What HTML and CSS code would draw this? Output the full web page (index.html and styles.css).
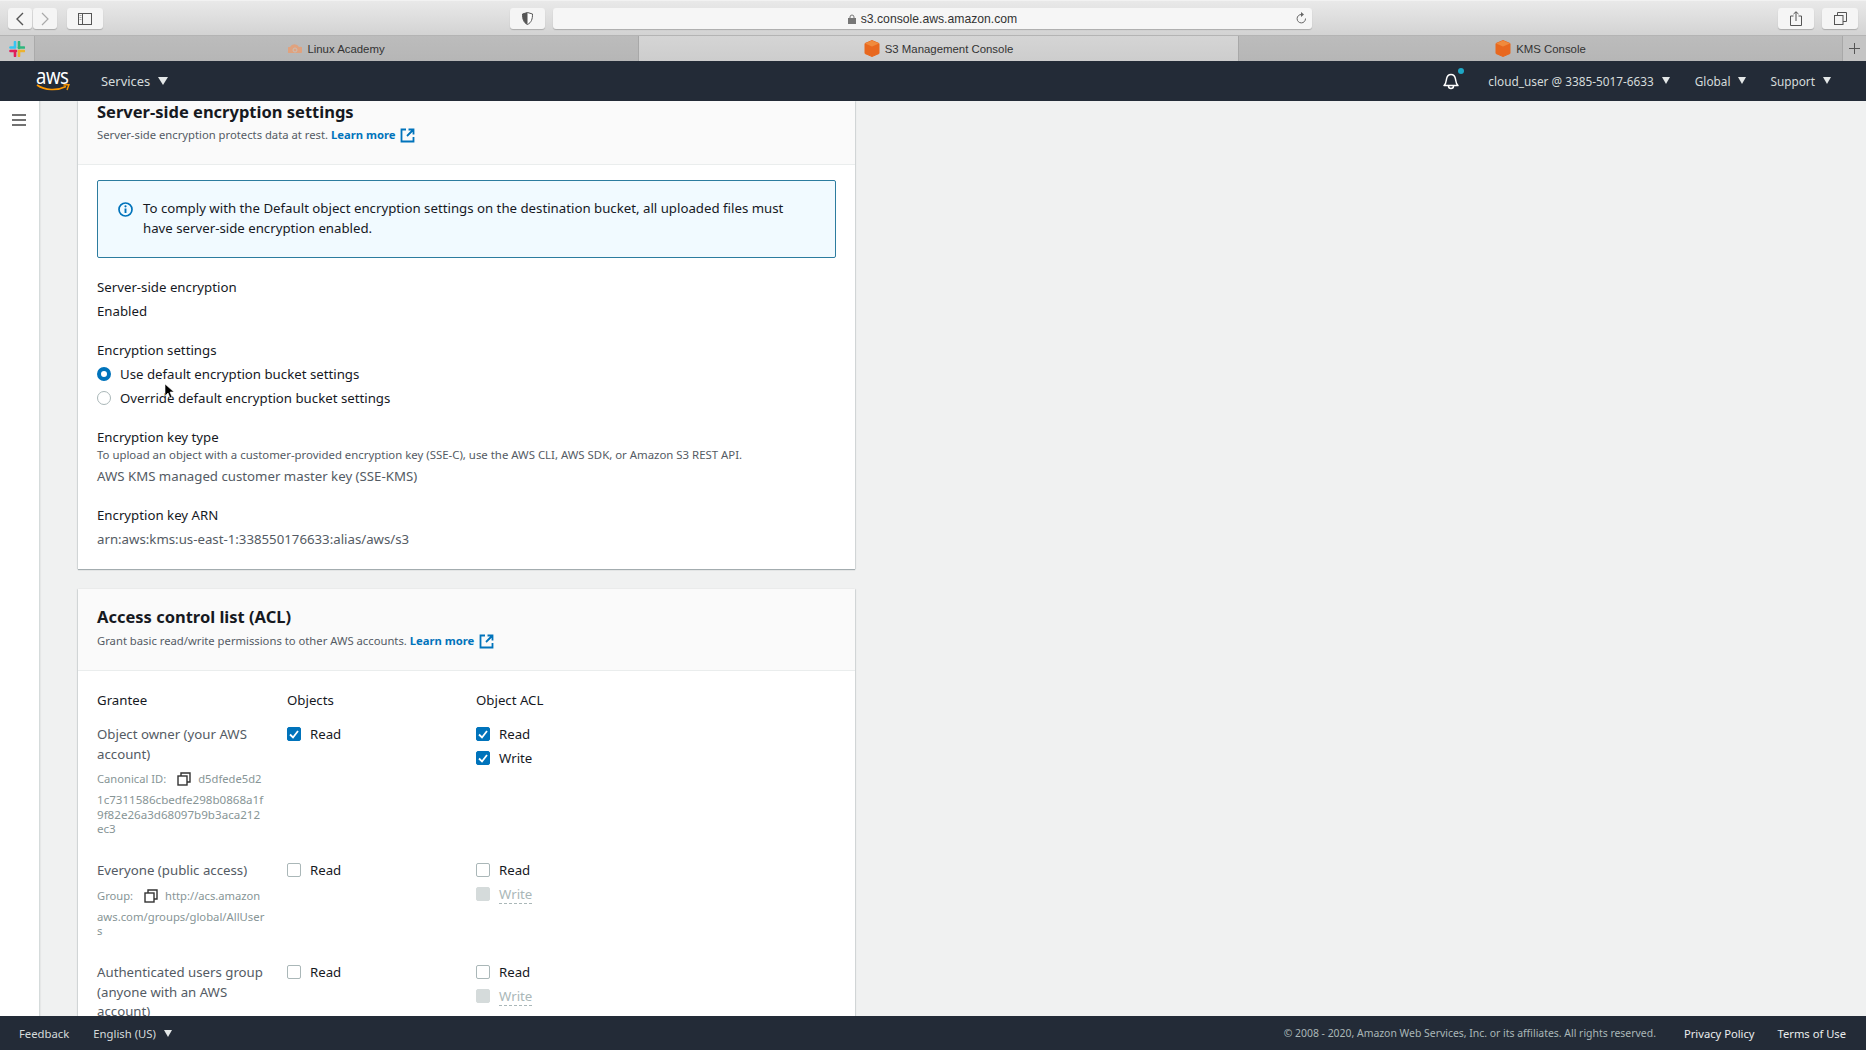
FILE: index.html
```html
<!DOCTYPE html>
<html lang="en">
<head>
<meta charset="utf-8">
<title>S3 Management Console</title>
<link rel="stylesheet" href="styles.css">
</head>
<body>
<div class="app">
  <header class="toolbar">
    <div class="tb-group">
      <div class="btn-pair">
        <button class="tb-btn nav-btn"><svg width="10" height="14" viewBox="0 0 10 14"><path d="M8 1 2 7l6 6" fill="none" stroke="#555" stroke-width="1.4"/></svg></button>
        <button class="tb-btn nav-btn"><svg width="10" height="14" viewBox="0 0 10 14"><path d="m2 1 6 6-6 6" fill="none" stroke="#aaa" stroke-width="1.2"/></svg></button>
      </div>
      <button class="tb-btn side-btn"><svg width="14" height="12" viewBox="0 0 14 12"><rect x=".5" y=".5" width="13" height="11" fill="none" stroke="#555"/><path d="M4.5 1v10" stroke="#555"/><path d="M1.5 2.500h2M1.500 4.500h2M1.500 6.500h2" stroke="#aaa"/></svg></button>
    </div>
    <div class="tb-center">
      <button class="tb-btn shield-btn"><svg width="11" height="13" viewBox="0 0 11 13"><path d="M5.500.5 10.500 2c0 5-1 8.500-5 10.500C1.500 10.500.5 7 .5 2z" fill="#fff" stroke="#555"/><path d="M5.500.5.500 2c0 5 1 8.500 5 10.500z" fill="#555"/></svg></button>
      <div class="address">
        <span class="url"><svg class="lock" width="8" height="10" viewBox="0 0 8 10"><rect y="4" width="8" height="6" fill="#777"/><path d="M2 4.500V3a2 2 0 0 1 4 0v1.500" fill="none" stroke="#777"/></svg>s3.console.aws.amazon.com</span>
        <svg class="reload" width="11" height="13" viewBox="0 0 11 13"><path d="M9.500 6.500A4.200 4.200 0 1 1 5.500 2.500" fill="none" stroke="#666"/><path d="M5 0v5l3-2.500z" fill="#666"/></svg>
      </div>
    </div>
    <div class="tb-group tb-right">
      <button class="tb-btn win-btn"><svg width="12" height="15" viewBox="0 0 12 15"><path d="M3.500 5H.5v9.500h11V5h-3" fill="none" stroke="#555"/><path d="M6 10V.8M3.500 3 6 .8 8.500 3" fill="none" stroke="#555"/></svg></button>
      <button class="tb-btn win-btn"><svg width="13" height="13" viewBox="0 0 13 13"><rect x=".5" y="3.500" width="8.500" height="9" fill="none" stroke="#555"/><path d="M3.500 3.500v-3h9v9H9" fill="none" stroke="#555"/></svg></button>
    </div>
  </header>

  <nav class="tabs">
    <div class="tab-pin"><svg width="16" height="16" viewBox="0 0 16 16"><path d="M6 1v5" stroke="#36c5f0" stroke-width="2.600" stroke-linecap="round"/><path d="M10 1v6" stroke="#2eb67d" stroke-width="2.600" stroke-linecap="round"/><path d="M1.500 10H7" stroke="#e01e5a" stroke-width="2.600" stroke-linecap="round"/><path d="M10 10h5" stroke="#ecb22e" stroke-width="2.600" stroke-linecap="round"/><path d="M6 10v5" stroke="#e01e5a" stroke-width="2.600" stroke-linecap="round"/><path d="M10 10v5" stroke="#ecb22e" stroke-width="2.600" stroke-linecap="round"/><path d="M1.500 6.500H6" stroke="#36c5f0" stroke-width="2.600" stroke-linecap="round"/><path d="M10 6.500h5" stroke="#2eb67d" stroke-width="2.600" stroke-linecap="round"/></svg></div>
    <div class="tab tab-linux"><svg class="fav" width="14" height="12" viewBox="0 0 14 12"><path d="M1 10a3 3 0 0 1 1-6 5 5 0 0 1 9 0 3 3 0 0 1 2 6z" fill="#e0a27e"/><circle cx="7" cy="7" r="2" fill="none" stroke="#c9c0b8"/></svg>Linux Academy</div>
    <div class="tab tab-active"><svg class="fav" width="16" height="17" viewBox="0 0 16 17"><path d="M8 .5 15 3.500v10L8 16.500 1 13.500v-10z" fill="#e8681f" stroke="#e8681f" stroke-linejoin="round"/><path d="M8 .5 15 3.500 8 6.500 1 3.500z" fill="#f08a3c"/></svg>S3 Management Console</div>
    <div class="tab tab-kms"><svg class="fav" width="16" height="17" viewBox="0 0 16 17"><path d="M8 .5 15 3.500v10L8 16.500 1 13.500v-10z" fill="#e8681f" stroke="#e8681f" stroke-linejoin="round"/><path d="M8 .5 15 3.500 8 6.500 1 3.500z" fill="#f08a3c"/></svg>KMS Console</div>
    <div class="tab-new"><svg width="11" height="11" viewBox="0 0 11 11"><path d="M5.500 0v11M0 5.500h11" stroke="#555" stroke-width="1"/></svg></div>
  </nav>

  <div class="topnav">
    <div class="aws-logo"><span class="aws-word">aws</span><svg class="smile" width="34" height="8" viewBox="0 0 34 8"><path d="M1 1c8 5.500 20 6 29 1.500" fill="none" stroke="#f90" stroke-width="1.600"/><path d="m27.500 1 5.500-.5L31 6" fill="none" stroke="#f90" stroke-width="1.400"/></svg></div>
    <span class="nav-item nav-services">Services<i class="caret caret-lg"></i></span>
    <span class="nav-spacer"></span>
    <span class="bell"><svg width="18" height="18" viewBox="0 0 18 18"><path d="M2 13.500c2-1.500 2-3 2.500-6.500C5 4 7 2.500 9 2.500S13 4 13.500 7c.5 3.500.5 5 2.500 6.500z" fill="none" stroke="#fff" stroke-width="1.500" stroke-linejoin="round"/><path d="M6.500 14a2.500 2.500 0 0 0 5 0" fill="none" stroke="#fff" stroke-width="1.500"/></svg><i class="bell-dot"></i></span>
    <span class="nav-item nav-user">cloud_user @ 3385-5017-6633<i class="caret"></i></span>
    <span class="nav-item nav-global">Global<i class="caret"></i></span>
    <span class="nav-item nav-support">Support<i class="caret"></i></span>
  </div>

  <div class="main">
    <aside class="sidenav"><svg width="16" height="12" viewBox="0 0 16 12"><path d="M1 1h14M1 6h14M1 11h14" stroke="#444" stroke-width="1.600"/></svg></aside>
    <div class="content">
      <section class="card card-enc">
        <div class="card-head head-enc">
          <h2>Server-side encryption settings</h2>
          <p class="sub">Server-side encryption protects data at rest. <a class="more">Learn more</a><svg class="ext" width="15" height="15" viewBox="0 0 15 15"><path d="M6 1.500H1.500v12h12V9M8.500 1.500h5v5M13 2 7 8" fill="none" stroke="#0073bb" stroke-width="1.800"/></svg></p>
        </div>
        <div class="card-body body-enc">
          <div class="alert">
            <svg class="alert-icon" width="15" height="15" viewBox="0 0 15 15"><circle cx="7.500" cy="7.500" r="6.500" fill="none" stroke="#0073bb" stroke-width="1.700"/><path d="M7.500 6.500v4.500" stroke="#0073bb" stroke-width="1.900"/><circle cx="7.500" cy="4.300" r="1.100" fill="#0073bb"/></svg>
            <p>To comply with the Default object encryption settings on the destination bucket, all uploaded files must have server-side encryption enabled.</p>
          </div>
          <div class="label lab-sse">Server-side encryption</div>
          <div class="value val-en">Enabled</div>
          <div class="label lab-set">Encryption settings</div>
          <label class="radio-row row-r1"><i class="radio radio-on"></i>Use default encryption bucket settings</label>
          <label class="radio-row"><i class="radio"></i>Override default encryption bucket settings</label>
          <div class="label lab-type">Encryption key type</div>
          <div class="hint">To upload an object with a customer-provided encryption key (SSE-C), use the AWS CLI, AWS SDK, or Amazon S3 REST API.</div>
          <div class="muted val-kms">AWS KMS managed customer master key (SSE-KMS)</div>
          <div class="label lab-arn">Encryption key ARN</div>
          <div class="muted val-arn">arn:aws:kms:us-east-1:338550176633:alias/aws/s3</div>
        </div>
      </section>

      <section class="card card-acl">
        <div class="card-head head-acl">
          <h2>Access control list (ACL)</h2>
          <p class="sub">Grant basic read/write permissions to other AWS accounts. <a class="more">Learn more</a><svg class="ext" width="15" height="15" viewBox="0 0 15 15"><path d="M6 1.500H1.500v12h12V9M8.500 1.500h5v5M13 2 7 8" fill="none" stroke="#0073bb" stroke-width="1.800"/></svg></p>
        </div>
        <div class="acl-grid">
          <div class="acl-head">Grantee</div><div class="acl-head">Objects</div><div class="acl-head">Object ACL</div>

          <div class="grantee row-owner">
            <div class="g-name">Object owner (your AWS account)</div>
            <div class="g-meta">Canonical ID:<svg class="copy" width="14" height="14" viewBox="0 0 14 14"><rect x="1" y="4" width="9" height="9" fill="#fff" stroke="#333" stroke-width="1.400"/><path d="M4 4V1h9v9h-3" fill="none" stroke="#333" stroke-width="1.400"/></svg>d5dfede5d2</div>
            <div class="g-long">1c7311586cbedfe298b0868a1f<br>9f82e26a3d68097b9b3aca212<br>ec3</div>
          </div>
          <div><label class="check"><i class="box box-on"><svg width="10" height="9" viewBox="0 0 10 9"><path d="m1 4.500 3 3L9 1" fill="none" stroke="#fff" stroke-width="1.800"/></svg></i>Read</label></div>
          <div><label class="check"><i class="box box-on"><svg width="10" height="9" viewBox="0 0 10 9"><path d="m1 4.500 3 3L9 1" fill="none" stroke="#fff" stroke-width="1.800"/></svg></i>Read</label><label class="check"><i class="box box-on"><svg width="10" height="9" viewBox="0 0 10 9"><path d="m1 4.500 3 3L9 1" fill="none" stroke="#fff" stroke-width="1.800"/></svg></i>Write</label></div>

          <div class="grantee row-public">
            <div class="g-name">Everyone (public access)</div>
            <div class="g-meta">Group:<svg class="copy" width="14" height="14" viewBox="0 0 14 14"><rect x="1" y="4" width="9" height="9" fill="#fff" stroke="#333" stroke-width="1.400"/><path d="M4 4V1h9v9h-3" fill="none" stroke="#333" stroke-width="1.400"/></svg>http://acs.amazon</div>
            <div class="g-long g-long-url">aws.com/groups/global/AllUser<br>s</div>
          </div>
          <div><label class="check"><i class="box"></i>Read</label></div>
          <div><label class="check"><i class="box"></i>Read</label><label class="check check-off"><i class="box box-off"></i><span class="dashed">Write</span></label></div>

          <div class="grantee row-auth">
            <div class="g-name">Authenticated users group (anyone with an AWS account)</div>
          </div>
          <div><label class="check"><i class="box"></i>Read</label></div>
          <div><label class="check"><i class="box"></i>Read</label><label class="check check-off"><i class="box box-off"></i><span class="dashed">Write</span></label></div>
        </div>
      </section>
    </div>
  </div>

  <footer class="footer">
    <span class="f-feedback">Feedback</span>
    <span class="f-lang">English (US)<i class="caret"></i></span>
    <span class="nav-spacer"></span>
    <span class="f-copy">© 2008 - 2020, Amazon Web Services, Inc. or its affiliates. All rights reserved.</span>
    <span class="f-link f-privacy">Privacy Policy</span>
    <span class="f-link">Terms of Use</span>
  </footer>
</div>
<svg class="cursor" width="11" height="16" viewBox="0 0 11 16"><path d="M1 1v12l3-3 2 5 2-1-2-5h4z" fill="#000" stroke="#fff" stroke-width=".6"/></svg>
</body>
</html>
```
FILE: styles.css
```css
* { box-sizing: border-box; }
html, body { margin: 0; height: 100%; overflow: hidden; }
body { font-family: "Noto Sans", "Open Sans", sans-serif; font-size: 13.240px; color: #16191f; background: #f0f1f1; }
.app { display: flex; flex-direction: column; height: 1050px; }
h2, p { margin: 0; }
i { display: inline-block; font-style: normal; }
button { padding: 0; margin: 0; border: 0; font: inherit; }

.toolbar { flex: 0 0 36px; display: flex; align-items: flex-start; padding: 8px 8px 0 8px; background: linear-gradient(#e9e9e9, #d3d3d3); border-bottom: 1px solid #b4b4b4; border-top: 1px solid #f2f2f2; }
.tb-group { display: flex; gap: 10px; }
.tb-right { margin-left: auto; gap: 8px; }
.btn-pair { display: flex; gap: 1px; }
.tb-btn { display: flex; align-items: center; justify-content: center; height: 21px; background: #f5f5f5; border-radius: 3px; box-shadow: 0 1px 1px rgba(0,0,0,.2); margin-top: -1px; }
.nav-btn { width: 24px; }
.side-btn { width: 36px; }
.win-btn { width: 36px; }
.tb-center { display: flex; gap: 8px; margin-left: 407px; }
.shield-btn { width: 35px; }
.address { position: relative; width: 759px; height: 21px; margin-top: -1px; background: #f6f6f6; border-radius: 3px; box-shadow: 0 1px 1px rgba(0,0,0,.2); display: flex; align-items: center; justify-content: center; font-family: "Liberation Sans", sans-serif; font-size: 12.200px; color: #333; }
.url { display: flex; align-items: center; gap: 5px; }
.reload { position: absolute; right: 5px; top: 4px; }

.tabs { flex: 0 0 25px; display: flex; background: #bcbcbc; font-family: "Liberation Sans", sans-serif; font-size: 11.400px; color: #333; }
.tab-pin { flex: 0 0 35px; display: flex; align-items: center; justify-content: center; background: #c8c8c8; border-right: 1px solid #aaa; }
.tab { display: flex; align-items: center; justify-content: center; gap: 5px; background: linear-gradient(#bcbcbc, #b6b6b6); border-right: 1px solid #a8a8a8; }
.tab-linux, .tab-kms { flex: 0 0 604px; }
.tab-active { flex: 0 0 600px; background: linear-gradient(#d5d5d5, #cdcdcd); }
.tab-new { flex: 1; display: flex; align-items: center; justify-content: center; background: #c4c4c4; }

.topnav { flex: 0 0 40px; display: flex; align-items: center; padding-bottom: 1px; background: #232b37; color: #d5dbdb; font-size: 11.800px; }
.aws-logo { position: relative; flex: 0 0 101px; height: 39px; }
.aws-word { position: absolute; left: 36px; top: 0; color: #fff; font-size: 22px; line-height: 28px; letter-spacing: -.5px; transform: scaleX(.84); transform-origin: left center; }
.smile { position: absolute; left: 36px; top: 23px; }
.nav-item { display: flex; align-items: center; white-space: nowrap; }
.nav-services { font-size: 12.900px; }
.caret { width: 0; height: 0; margin-left: 8px; border-left: 4.500px solid transparent; border-right: 4.500px solid transparent; border-top: 7px solid #e4e8e8; }
.caret-lg { border-left-width: 5.500px; border-right-width: 5.500px; border-top-width: 8px; }
.nav-spacer { flex: 1; }
.bell { position: relative; width: 18px; height: 18px; margin-right: 28px; }
.bell-dot { position: absolute; right: -4px; top: -4px; width: 6px; height: 6px; border-radius: 50%; background: #1ea7c5; }
.nav-global { margin-left: 25px; }
.nav-support { margin-left: 24px; margin-right: 35px; }

.main { flex: 1; min-height: 0; display: flex; overflow: hidden; }
.sidenav { flex: 0 0 40px; background: #fff; border-right: 1px solid #d5dbdb; padding: 11px 0 0 11px; box-shadow: 1px 0 1px rgba(0,0,0,.04); }
.content { flex: 1; min-width: 0; padding-left: 38px; }
.card { width: 777px; background: #fff; box-shadow: 0 1px 1px rgba(0,28,36,.3), 1px 0 1px rgba(0,28,36,.08), -1px 0 1px rgba(0,28,36,.08); }
.card-acl { margin-top: 20px; }
.card-head { background: #fafafa; border-bottom: 1px solid #eaeded; padding: 0 19px; }
.head-enc { height: 64px; }
.head-acl { height: 82px; padding-top: 17px; }
h2 { font-size: 16.500px; line-height: 22px; font-weight: 700; color: #16191f; }
.sub { display: flex; align-items: center; font-size: 11.250px; line-height: 16px; color: #545b64; margin-top: 4px; white-space: pre-wrap; }
.head-acl .sub { margin-top: 5px; }
.more { color: #0073bb; font-weight: 700; }
.ext { margin-left: 5px; }

.body-enc { padding: 15px 19px 0; height: 404px; }
.alert { display: flex; height: 78px; padding: 18px 40px 0 20px; background: #f1faff; border: 1px solid #2c7c9f; border-radius: 2px; }
.alert-icon { flex: none; margin: 3px 10px 0 0; }
.alert p { line-height: 19.500px; }
.label, .value, .radio-row, .muted { line-height: 20px; }
.lab-sse { margin-top: 19px; }
.val-en { margin-top: 4px; }
.lab-set { margin-top: 19px; }
.row-r1 { margin-top: 4px; }
.radio-row { display: flex; align-items: center; height: 20px; margin-bottom: 4px; }
.radio { width: 14px; height: 14px; margin-right: 9px; border-radius: 50%; border: 1px solid #aab7b8; background: #fff; }
.radio-on { border: 4px solid #0073bb; }
.lab-type { margin-top: 19px; }
.hint { font-size: 11.400px; line-height: 15px; color: #545b64; }
.muted { color: #545b64; }
.val-kms { margin-top: 4px; }
.lab-arn { margin-top: 19px; }
.val-arn { margin-top: 4px; }

.acl-grid { display: grid; grid-template-columns: 190px 189px 1fr; padding: 19px 19px 0; }
.acl-head { line-height: 20px; margin-bottom: 14px; }
.check { display: flex; align-items: center; height: 20px; margin-bottom: 4px; }
.box { display: flex; align-items: center; justify-content: center; width: 14px; height: 14px; margin-right: 9px; background: #fff; border: 1px solid #aab7b8; border-radius: 2px; }
.box-on { background: #0073bb; border-color: #0073bb; }
.box-off { background: #d5dbdb; border-color: #d5dbdb; }
.check-off { color: #aab7b8; }
.dashed { text-decoration: underline dashed #aab7b8 1px; text-underline-offset: 4px; }
.grantee { padding-right: 14px; }
.g-name { margin-top: 1px; line-height: 19.500px; color: #545b64; }
.g-meta { display: flex; align-items: center; margin-top: 7px; font-size: 11.200px; line-height: 16px; color: #879596; white-space: nowrap; }
.copy { margin: 0 7px 0 11px; }
.g-long { margin-top: 6px; font-size: 11.600px; line-height: 14.500px; color: #879596; white-space: nowrap; }
.g-long-url { font-size: 11.300px; }
.row-owner { height: 136px; }
.row-public { height: 102px; }

.footer { flex: 0 0 34px; display: flex; align-items: center; position: relative; z-index: 1; background: #232b37; color: #d5dbdb; font-size: 11.300px; padding: 0 20px 0 19px; }
.f-lang { display: flex; align-items: center; margin-left: 24px; }
.f-copy { font-size: 10.430px; color: #aab7b8; }
.f-link { color: #eaeded; font-size: 11.200px; }
.f-privacy { margin: 0 23px 0 28px; }

.cursor { position: absolute; left: 164px; top: 383px; }
```
